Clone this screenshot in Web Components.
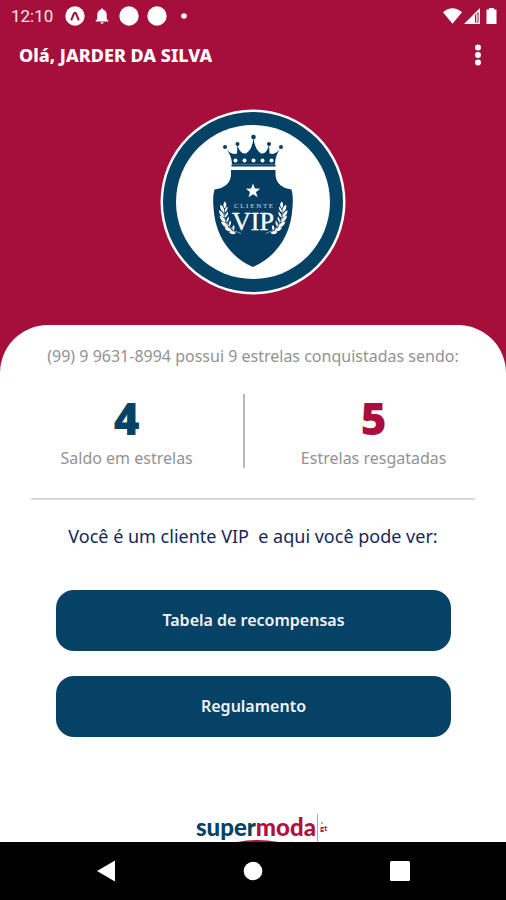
<!DOCTYPE html>
<html lang="pt-BR">
<head>
<meta charset="utf-8">
<meta name="viewport" content="width=device-width, initial-scale=1">
<title>Cliente VIP</title>
<style>
  :root {
    --crimson: #a60f3b;
    --navy: #064265;
    --ink: #14275a;
    --muted: #929292;
  }
  body {
    margin: 0;
    background: var(--crimson);
    font-family: "Noto Sans", "Open Sans", sans-serif;
  }
</style>
</head>
<body>
<vip-app></vip-app>

<script>
const define = (name, html) => {
  const template = document.createElement('template');
  template.innerHTML = html;
  customElements.define(name, class extends HTMLElement {
    constructor() {
      super();
      this.attachShadow({ mode: 'open' }).append(template.content.cloneNode(true));
    }
  });
};

define('status-bar', `
  <style>
    :host { display: flex; align-items: center; justify-content: space-between; height: 32px; padding: 0 8px 0 11px; color: #fff; font: 17px/32px Roboto, sans-serif; }
    div { display: flex; align-items: center; }
    .left { gap: 8px; }
    .left span { margin-right: 4px; opacity: .9; }
    .right { gap: 2px; }
    svg { display: block; fill: currentColor; }
  </style>
  <div class="left">
    <span>12:10</span>
    <svg width="20" height="20" viewBox="0 0 20 20"><circle cx="10" cy="10" r="9.700"/><path d="M6.500 13.500 9 7.500Q10 6 11 7.500L13.500 13.500" fill="none" stroke="#a60f3b" stroke-width="2" stroke-linecap="round"/></svg>
    <svg width="18" height="18" viewBox="0 0 18 18"><path d="M9 1.500a1.300 1.300 0 0 1 1.300 1.300C12.800 3.500 13.700 5.500 13.700 8v4l1.700 1.700v.8H2.600v-.8L4.300 12V8c0-2.500.9-4.500 3.400-5.200A1.300 1.300 0 0 1 9 1.500ZM7.500 15.300h3a1.500 1.500 0 0 1-3 0Z"/></svg>
    <svg width="20" height="20" viewBox="0 0 20 20"><circle cx="10" cy="10" r="9.700"/></svg>
    <svg width="20" height="20" viewBox="0 0 20 20"><circle cx="10" cy="10" r="9.700"/></svg>
    <svg width="18" height="6" viewBox="0 0 18 6"><circle cx="9" cy="3" r="2.800"/></svg>
  </div>
  <div class="right">
    <svg width="19" height="16" viewBox="0 0 19 16"><path d="M0 4.200Q9.500-3.600 19 4.200L9.500 15.800Z"/></svg>
    <svg width="20" height="16" viewBox="0 0 20 16"><path fill-rule="evenodd" d="M0 16 16 0v16ZM11 7v7.500h3.500V4Z"/><path d="M12.200 6h1.300v8h-1.300Z"/></svg>
    <svg width="12" height="16" viewBox="0 0 12 16"><path d="M3 0h5v1.500h2.500V16H.5V1.500H3Z"/></svg>
  </div>
`);

define('app-header', `
  <style>
    :host { display: flex; align-items: center; justify-content: space-between; height: 46px; padding: 0 16px 0 19px; color: #fff; }
    h1 { margin: 0; font-size: 18px; line-height: 24px; font-weight: 800; }
    button { width: 24px; height: 32px; padding: 0; border: 0; background: none; color: inherit; display: grid; place-items: center; }
  </style>
  <h1><slot></slot></h1>
  <button type="button" aria-label="Mais opções">
    <svg width="8" height="24" viewBox="0 0 8 24" fill="currentColor"><circle cx="4" cy="4.500" r="3"/><circle cx="4" cy="12" r="3"/><circle cx="4" cy="19.500" r="3"/></svg>
  </button>
`);

define('vip-badge', `
  <style>
    :host { display: flex; justify-content: center; padding: 31px 0 30px; }
    svg { display: block; }
    text { font-family: "Liberation Serif", serif; fill: #fff; text-anchor: middle; }
  </style>
  <svg width="186" height="186" viewBox="7 9.500 186 186" role="img" aria-label="Cliente VIP">
    <circle cx="100" cy="102.500" r="92.500" fill="#fff"/>
    <circle cx="100" cy="102.500" r="90" fill="#064265"/>
    <circle cx="100" cy="102.500" r="77" fill="#fff"/>
    <g fill="#063d62">
      <circle cx="72" cy="47.500" r="2"/><circle cx="84.500" cy="44.500" r="2"/><circle cx="100.500" cy="37.500" r="2.300"/><circle cx="116" cy="44.500" r="2"/><circle cx="128" cy="47.500" r="2"/>
      <path d="M72 48Q77.500 56 84 54L84.500 45Q86.500 55 93 54Q99.500 50 100.500 38Q101.500 50 108 54Q114 55 116 45L116.500 54Q123 56 128 48Q122 56 122 65H79Q79 56 72 48Z"/>
      <path d="M78.500 65h44v2h-44Z"/>
      <path d="M78 70.500H122.500V76Q124 88 138.500 90Q140.500 97 139.500 108C138 137 122 158 100 167.500C78 158 62 137 60.500 108Q59.500 97 61.500 90Q76.500 88 78 76Z"/>
    </g>
    <g fill="#fff">
      <circle cx="82.500" cy="61" r="2"/><circle cx="91.500" cy="61" r="2"/><circle cx="100.500" cy="61" r="2"/><circle cx="109.500" cy="61" r="2"/><circle cx="118.500" cy="61" r="2"/>
      <path d="m100 84 1.900 5 5.300.200-4.200 3.300 1.500 5.200-4.500-3-4.500 3 1.500-5.200-4.200-3.300 5.300-.200Z"/>
      <g id="laurel">
        <path d="M88 134Q72 130 70.500 112" fill="none" stroke="#fff" stroke-width=".5"/>
        <path d="M72 109Q69 106 71.500 102Q75 104 72 109ZM71 113Q66 110 67.500 105Q72 108 71 113ZM71 118Q66 116 66 110.500Q71 113 71 118ZM72.500 123Q67 121.500 66.500 116Q72 117.500 72.500 123ZM75.500 128Q69.500 128 68 122Q74 122.500 75.500 128ZM79 131.500Q74 133 71.500 128Q77 127 79 131.500ZM83 133.500Q79 136.500 76 132.500Q80 130 83 133.500Z"/>
        <path d="M71.500 113Q75 111 74.500 107Q71.500 109 71.500 113ZM72 118Q75.500 116 75 112Q72 114 72 118ZM73.500 123Q77 120.500 75.500 117Q73 119.500 73.500 123ZM76 127Q79 124.500 77.500 121Q75 123.500 76 127ZM80 131Q83 128 80.500 125.500Q78.500 128 80 131Z"/>
      </g>
      <use href="#laurel" transform="matrix(-1 0 0 1 200.500 0)"/>
    </g>
    <text x="100.500" y="108" font-size="7" opacity=".8">C L I E N T E</text>
    <text x="100" y="130" font-size="26" stroke="#fff" stroke-width=".4">VIP</text>
  </svg>
`);

define('star-count', `
  <style>
    :host { display: block; text-align: center; }
    strong { display: block; font-size: 44px; line-height: 48px; font-weight: 900; }
    span { display: block; margin-top: 4px; font-size: 16px; line-height: 24px; color: var(--muted); }
  </style>
  <strong><slot name="value"></slot></strong>
  <span><slot></slot></span>
`);

define('menu-button', `
  <style>
    :host { display: block; }
    button { display: block; width: 100%; padding: 18px 16px 19px; border: 0; border-radius: 18px; background: var(--navy); color: #f1f4fa; font: 600 16px/24px "Noto Sans", sans-serif; }
  </style>
  <button type="button"><slot></slot></button>
`);

define('brand-logo', `
  <style>
    :host { display: flex; justify-content: center; height: 32px; overflow: hidden; }
    svg { display: block; flex: none; }
    text { font-family: Lato, "Open Sans", sans-serif; font-weight: 900; }
  </style>
  <svg width="134" height="40" viewBox="0 0 134 40" role="img" aria-label="supermoda gt">
    <text x="1" y="26" font-size="24"><tspan fill="#064265">super</tspan><tspan fill="#b0113f">moda</tspan></text>
    <path d="M38 33Q62 27 88 33Z" fill="#b0113f"/>
    <path d="M122.500 4v28" stroke="#c99aa8" stroke-width="1"/>
    <circle cx="127" cy="13" r=".8" fill="#b0113f"/>
    <text x="125" y="21" font-size="8" fill="#b0113f">gt</text>
  </svg>
`);

define('info-sheet', `
  <style>
    :host { display: flex; flex-direction: column; flex: 1; background: #fff; border-radius: 48px 48px 0 0; padding-top: 19px; }
    p { margin: 0; text-align: center; line-height: 24px; }
    .summary { font-size: 16px; color: var(--muted); }
    .stats { display: grid; grid-template-columns: 10fr 2px 11fr; padding: 26px 4px 30px 10px; }
    .rule { background: #b9b9b9; }
    star-count { margin-bottom: -2px; }
    hr { width: calc(100% - 62px); margin: 0 auto; border: 0; border-top: 2px solid #d8dada; }
    .lead { margin-top: 24px; font-size: 18px; color: var(--ink); white-space: pre-wrap; }
    nav { display: grid; gap: 25px; margin: 42px 55px 0 56px; }
    brand-logo { margin-top: auto; padding-left: 17px; }
    .saldo b { color: var(--navy); }
    .resgate b { color: #ab0d3c; }
    b { font-weight: inherit; }
  </style>
  <p class="summary">(99) 9 9631-8994 possui 9 estrelas conquistadas sendo:</p>
  <section class="stats">
    <star-count class="saldo"><b slot="value">4</b>Saldo em estrelas</star-count>
    <div class="rule"></div>
    <star-count class="resgate"><b slot="value">5</b>Estrelas resgatadas</star-count>
  </section>
  <hr>
  <p class="lead">Você é um cliente VIP  e aqui você pode ver:</p>
  <nav>
    <menu-button>Tabela de recompensas</menu-button>
    <menu-button>Regulamento</menu-button>
  </nav>
  <brand-logo></brand-logo>
`);

define('system-nav', `
  <style>
    :host { display: flex; justify-content: space-around; align-items: center; height: 58px; padding: 0 33px; background: #000; }
    button { width: 48px; height: 48px; padding: 0; border: 0; background: none; color: #fff; display: grid; place-items: center; }
    svg { display: block; fill: currentColor; }
  </style>
  <button type="button" aria-label="Voltar"><svg width="20" height="22" viewBox="0 0 20 22"><path d="M1 11 19 .500v21Z"/></svg></button>
  <button type="button" aria-label="Início"><svg width="20" height="20" viewBox="0 0 20 20"><circle cx="10" cy="10" r="9.300"/></svg></button>
  <button type="button" aria-label="Recentes"><svg width="20" height="20" viewBox="0 0 20 20"><rect width="20" height="20" rx="1.500"/></svg></button>
`);

define('vip-app', `
  <style>
    :host { display: flex; flex-direction: column; min-height: 100vh; }
  </style>
  <status-bar></status-bar>
  <app-header>Olá, JARDER DA SILVA</app-header>
  <vip-badge></vip-badge>
  <info-sheet></info-sheet>
  <system-nav></system-nav>
`);
</script>
</body>
</html>
